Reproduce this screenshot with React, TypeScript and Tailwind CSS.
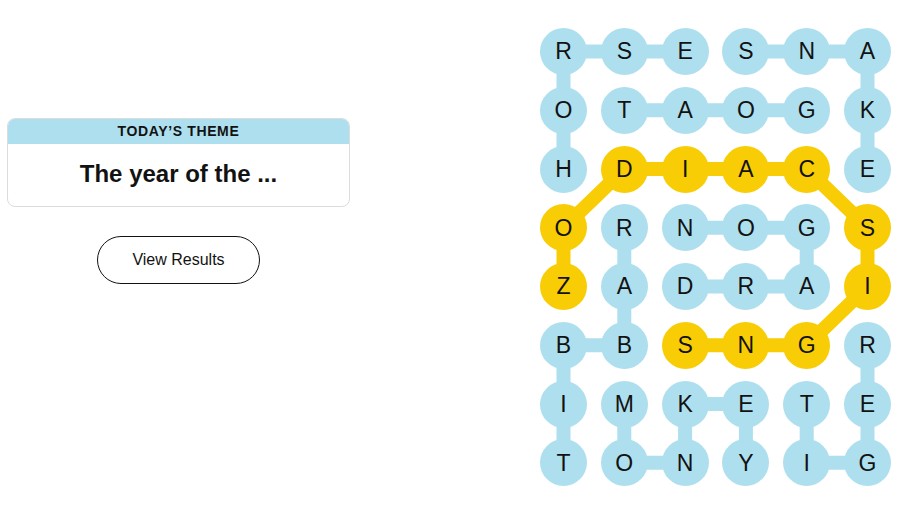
import React from "react";

const GRID = ["RSESNA", "OTAOGK", "HDIACE", "ORNOGS", "ZADRAI", "BBSNGR", "IMKETE", "TONYIG"];

type P = [number, number];

const BLUE_WORDS: P[][] = [
  [[2, 0], [1, 0], [0, 0], [0, 1], [0, 2]],
  [[0, 3], [0, 4], [0, 5], [1, 5], [2, 5]],
  [[1, 4], [1, 3], [1, 2], [1, 1]],
  [[4, 2], [4, 3], [4, 4], [3, 4], [3, 3], [3, 2]],
  [[3, 1], [4, 1], [5, 1], [5, 0], [6, 0], [7, 0]],
  [[6, 1], [7, 1], [7, 2], [6, 2], [6, 3], [7, 3]],
  [[6, 4], [7, 4], [7, 5], [6, 5], [5, 5]],
];

const SPANGRAM: P[] = [
  [4, 0], [3, 0], [2, 1], [2, 2], [2, 3], [2, 4], [3, 5], [4, 5], [5, 4], [5, 3], [5, 2],
];

const BLUE = "#aedfee";
const YELLOW = "#f8cd05";
const D = 47;
const CX = 60.8;
const CY = 58.76;

const cx = (c: number) => D / 2 + c * CX;
const cy = (r: number) => D / 2 + r * CY;

const yellowSet = new Set(SPANGRAM.map(([r, c]) => `${r}-${c}`));

function Path({ pts, color }: { pts: P[]; color: string }) {
  const d = pts.map(([r, c], i) => `${i === 0 ? "M" : "L"}${cx(c)} ${cy(r)}`).join(" ");
  return <path d={d} stroke={color} strokeWidth={14} fill="none" strokeLinejoin="round" />;
}

export default function App() {
  return (
    <div className="flex h-[509px] w-[905px] bg-white text-black" style={{ fontFamily: '"Liberation Sans", Arial, sans-serif' }}>
      <div className="flex w-[357px] flex-col items-center px-[7px] pt-[118px]">
        <div className="w-full overflow-hidden rounded-[8px] border border-[#dcdcdc]">
          <div className="flex h-[25px] items-center justify-center bg-[#aedfee] text-[14px] font-bold tracking-[0.045em] text-[#121212]">
            TODAY’S THEME
          </div>
          <div className="flex h-[62px] items-center justify-center pb-[2px] text-[24px] font-bold text-[#121212]">
            The year of the ...
          </div>
        </div>
        <button className="mt-[29px] flex h-[48px] w-[163px] items-center justify-center rounded-full border border-[#121212] text-[16px] text-[#121212]">
          View Results
        </button>
      </div>
      <div className="relative ml-[183px] mt-[28px] h-fit">
        <svg className="absolute left-0 top-0" width={D + 5 * CX} height={D + 7 * CY}>
          {BLUE_WORDS.map((w, i) => (
            <Path key={i} pts={w} color={BLUE} />
          ))}
          <Path pts={SPANGRAM} color={YELLOW} />
        </svg>
        <div className="relative grid grid-cols-[repeat(6,47px)] gap-x-[13.8px] gap-y-[11.76px]">
          {GRID.flatMap((row, r) =>
            row.split("").map((ch, c) => (
              <div
                key={`${r}-${c}`}
                className={`flex h-[47px] w-[47px] items-center justify-center rounded-full text-[23px] text-[#121212] ${
                  yellowSet.has(`${r}-${c}`) ? "bg-[#f8cd05]" : "bg-[#aedfee]"
                }`}
              >
                {ch}
              </div>
            ))
          )}
        </div>
      </div>
    </div>
  );
}
